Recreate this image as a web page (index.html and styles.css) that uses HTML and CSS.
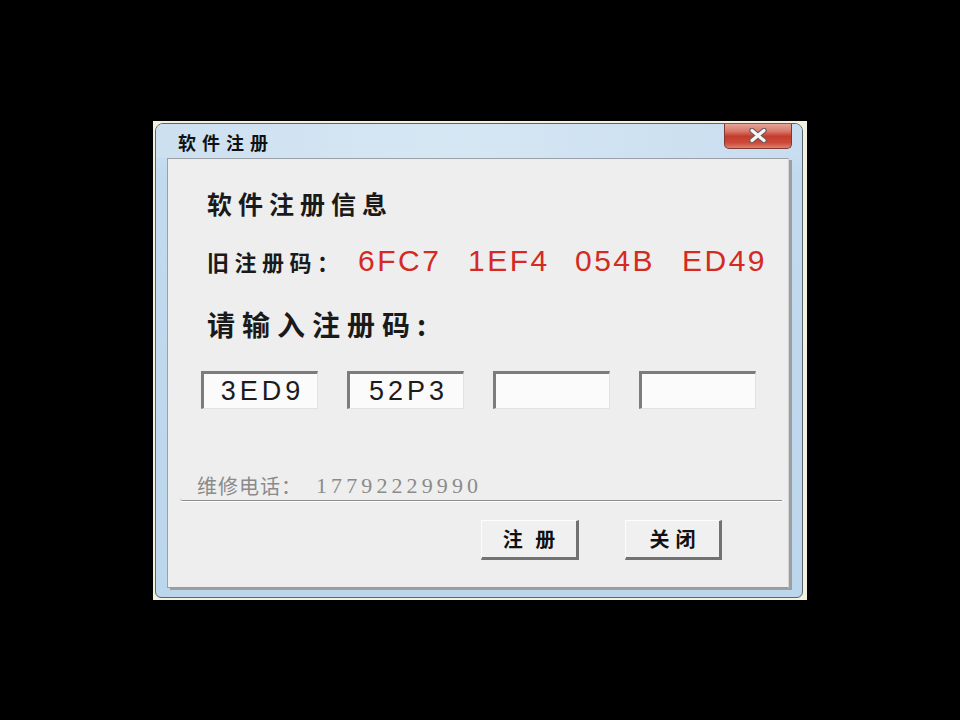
FILE: index.html
```html
<!DOCTYPE html>
<html lang="zh-CN">
<head>
<meta charset="utf-8">
<title>软件注册</title>
<link rel="stylesheet" href="styles.css">
</head>
<body>
<div class="frame">
  <div class="window">
    <div class="titlebar">
      <span class="title">软件注册</span>
      <div class="close">
        <svg width="22" height="15" viewBox="0 0 22 15">
          <path d="M5 2.5 L17 12.5 M17 2.5 L5 12.5" stroke="#6b5a58" stroke-width="5.5" stroke-linecap="round" fill="none"/>
          <path d="M5 2.5 L17 12.5 M17 2.5 L5 12.5" stroke="#f6f6f6" stroke-width="3.2" stroke-linecap="round" fill="none"/>
        </svg>
      </div>
    </div>
    <div class="client">
      <h1 class="heading">软件注册信息</h1>
      <div class="oldcode">
        <span class="label">旧注册码：</span>
        <span class="code c1">6FC7</span><span class="code">1EF4</span><span class="code">054B</span><span class="code">ED49</span>
      </div>
      <h2 class="prompt">请输入注册码:</h2>
      <div class="inputs">
        <div class="box">3ED9</div>
        <div class="box">52P3</div>
        <div class="box"></div>
        <div class="box"></div>
      </div>
      <div class="phone"><span class="phone-label">维修电话：</span><span class="phone-num">17792229990</span></div>
      <div class="buttons">
        <div class="btn btn-reg">注 册</div>
        <div class="btn btn-close">关闭</div>
      </div>
    </div>
  </div>
</div>
</body>
</html>
```
FILE: styles.css
```css
html, body {
  margin: 0;
  padding: 0;
  background: #000;
}
body {
  width: 960px;
  height: 720px;
  padding-top: 121px;
  padding-left: 153px;
  box-sizing: border-box;
  font-family: "Noto Sans CJK SC", sans-serif;
}
.frame {
  width: 654px;
  height: 479px;
  box-sizing: border-box;
  padding: 2px 4px 2px 2px;
  background: #f4f1dc;
}
.window {
  width: 648px;
  height: 475px;
  box-sizing: border-box;
  border: 1px solid #5d6670;
  border-radius: 8px 8px 6px 6px;
  background: linear-gradient(to bottom, #d3e4f2 0%, #c3daee 10%, #bcd6eb 100%);
  display: flex;
  flex-direction: column;
  overflow: hidden;
}
.titlebar {
  height: 34px;
  flex: none;
  display: flex;
  align-items: flex-start;
  position: relative;
  background: linear-gradient(to right, #cde0f0 0%, #d6e7f4 45%, #c8ddef 100%);
}
.title {
  margin-left: 22px;
  margin-top: 5px;
  font-size: 18px;
  font-weight: bold;
  letter-spacing: 6px;
  line-height: 26px;
  color: #111;
}
.close {
  position: absolute;
  top: -2px;
  right: 10px;
  width: 68px;
  height: 27px;
  box-sizing: border-box;
  border: 1px solid #7e3a32;
  border-top: none;
  border-radius: 0 0 5px 5px;
  background: linear-gradient(to bottom, #e9b0a6 0%, #d77a6c 35%, #c43b2c 55%, #cc4a3a 80%, #dd8070 100%);
  display: flex;
  align-items: center;
  justify-content: center;
}
.close svg {
  display: block;
  margin-top: 1px;
}
.client {
  margin-left: 11px;
  width: 622px;
  height: 430px;
  box-sizing: border-box;
  background: #eeeeee;
  border-top: 1px solid #9aa0a6;
  border-left: 1px solid #9aa0a6;
  border-right: 1px solid #d4d4d4;
  border-bottom: 1px solid #9a9a9a;
  box-shadow: 3px 2px 0 #9b9fa3;
  display: flex;
  flex-direction: column;
}
.heading {
  margin: 29px 0 0 39px;
  font-size: 25px;
  font-weight: bold;
  line-height: 30px;
  letter-spacing: 6px;
  color: #1a1a1a;
}
.oldcode {
  margin: 25px 0 0 39px;
  height: 36px;
  display: flex;
  align-items: center;
}
.label {
  width: 151px;
  flex: none;
  font-size: 22px;
  font-weight: bold;
  letter-spacing: 5.5px;
  color: #1a1a1a;
  line-height: 36px;
}
.code {
  width: 107px;
  flex: none;
  font-family: "Liberation Sans", Arial, sans-serif;
  font-size: 30px;
  letter-spacing: 2.5px;
  color: #d42a22;
  line-height: 36px;
}
.code.c1 {
  width: 110px;
}
.prompt {
  margin: 27px 0 0 39px;
  font-size: 28px;
  font-weight: bold;
  line-height: 36px;
  letter-spacing: 7px;
  color: #1a1a1a;
}
.inputs {
  margin: 29px 0 0 33px;
  display: flex;
  gap: 29px;
}
.box {
  width: 117px;
  height: 38px;
  box-sizing: border-box;
  background: #fbfbfb;
  border-top: 3px solid #7c7c7c;
  border-left: 3px solid #7c7c7c;
  border-right: 1px solid #e2e2e2;
  border-bottom: 1px solid #e2e2e2;
  font-family: "Liberation Sans", Arial, sans-serif;
  font-size: 27px;
  letter-spacing: 4px;
  text-indent: 4px;
  line-height: 34px;
  text-align: center;
  color: #1c1c1c;
}
.phone {
  margin: 63px 6px 0 12px;
  height: 29px;
  box-sizing: border-box;
  padding-left: 17px;
  border-bottom: 1px solid #8c8c8c;
  border-bottom-left-radius: 3px;
  box-shadow: 0 1px 0 #ffffff;
  display: flex;
  align-items: center;
  color: #8a8a8a;
}
.phone-label {
  font-size: 20px;
  letter-spacing: 1px;
  line-height: 28px;
  margin-right: 14px;
}
.phone-num {
  font-family: "Liberation Serif", "Times New Roman", serif;
  font-size: 22px;
  letter-spacing: 4.1px;
  line-height: 28px;
}
.buttons {
  margin: 19px 0 0 313px;
  display: flex;
  gap: 46px;
}
.btn {
  height: 40px;
  box-sizing: border-box;
  background: #f0f0f0;
  border-top: 1px solid #fdfdfd;
  border-left: 1px solid #fdfdfd;
  border-right: 3px solid #727272;
  border-bottom: 3px solid #727272;
  font-size: 20px;
  font-weight: bold;
  line-height: 36px;
  text-align: center;
  color: #111;
}
.btn-reg {
  width: 98px;
  letter-spacing: 4px;
  text-indent: 4px;
}
.btn-close {
  width: 97px;
  letter-spacing: 6px;
  text-indent: 6px;
}
```
